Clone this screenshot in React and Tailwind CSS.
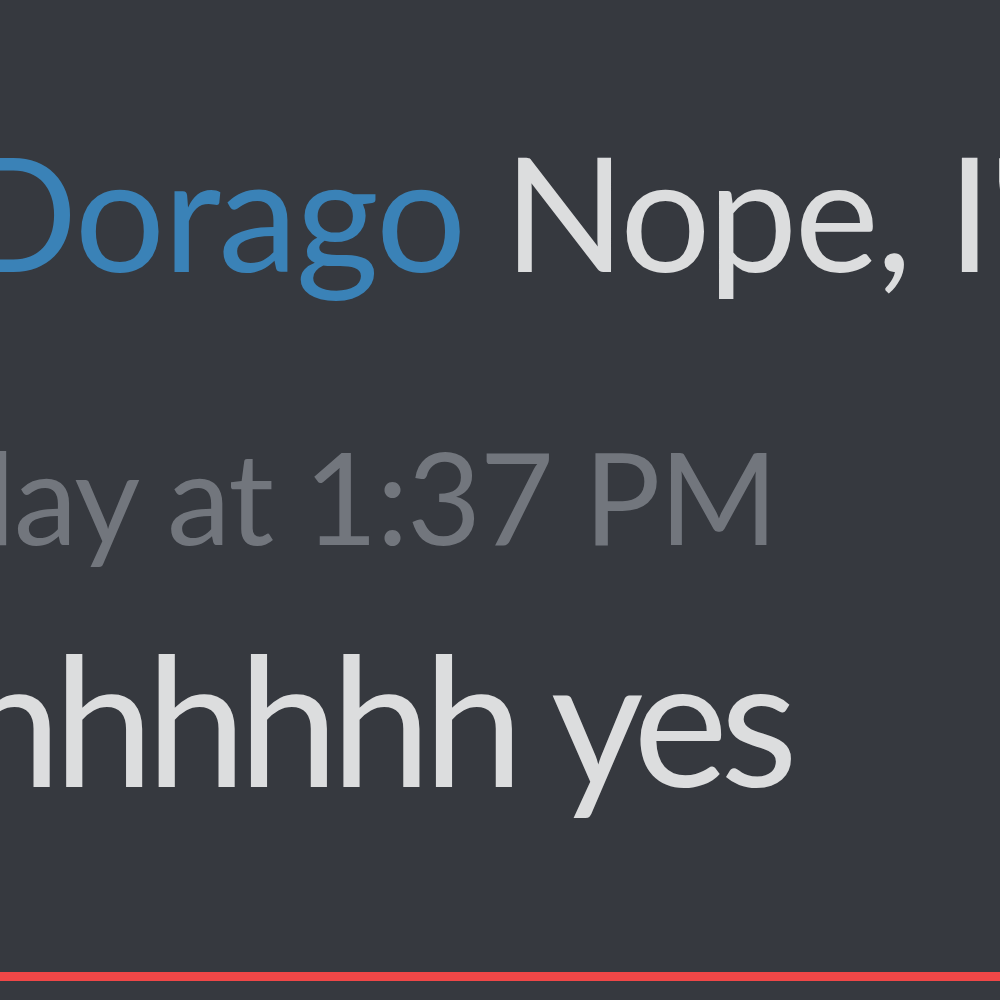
import React from 'react'

const font = { fontFamily: 'Lato, "Open Sans", sans-serif' }

export default function App() {
  return (
    <div className="w-[1000px] h-[1000px] overflow-hidden bg-[#36393f] flex flex-col" style={font}>
      {/* reply preview */}
      <div className="mt-[130px] h-[160px] leading-[160px] text-[160px] tracking-[-2px] whitespace-nowrap -ml-[44px]">
        <span className="text-[#3a82b7]">Dorago</span>{' '}
        <span className="text-[#dcddde] tracking-[-3px]">Nope, I'm here</span>
      </div>

      {/* timestamp */}
      <div className="mt-[142px] h-[128px] leading-[128px] text-[128px] tracking-[-1.5px] whitespace-nowrap -ml-[186px] text-[#72767d]">
        Today at 1:37 PM
      </div>

      {/* message */}
      <div className="mt-[67px] h-[180px] leading-[180px] text-[180px] tracking-[-8px] whitespace-nowrap -ml-[39px] text-[#dcddde]">
        hhhhhh<span className="tracking-[-11px]"> </span>yes
      </div>

      <div className="flex-1" />
      {/* new messages divider */}
      <div className="h-[9px] bg-[#f04747] mb-[19px]" />
    </div>
  )
}
